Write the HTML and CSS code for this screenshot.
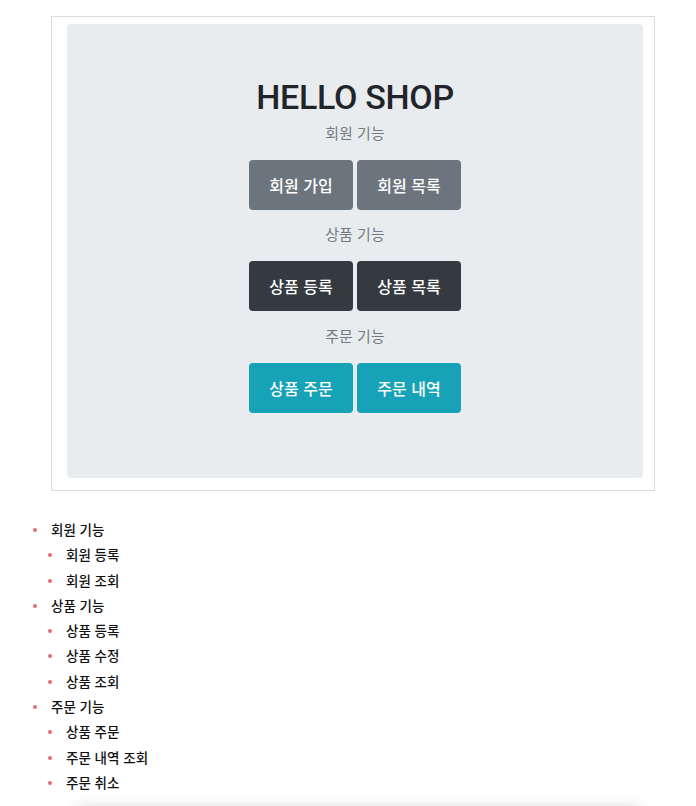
FILE: index.html
```html
<!DOCTYPE html>
<html lang="ko">
<head>
<meta charset="utf-8">
<link rel="stylesheet" href="styles.css">
</head>
<body>
<div class="shot">
  <div class="jumbo">
    <h1 class="title">HELLO SHOP</h1>
    <p class="label">회원 기능</p>
    <div class="btns">
      <a class="btn btn-gray">회원 가입</a>
      <a class="btn btn-gray">회원 목록</a>
    </div>
    <p class="label">상품 기능</p>
    <div class="btns">
      <a class="btn btn-dark">상품 등록</a>
      <a class="btn btn-dark">상품 목록</a>
    </div>
    <p class="label">주문 기능</p>
    <div class="btns">
      <a class="btn btn-info">상품 주문</a>
      <a class="btn btn-info">주문 내역</a>
    </div>
  </div>
</div>
<ul class="list">
  <li>회원 기능
    <ul class="sub">
      <li>회원 등록</li>
      <li>회원 조회</li>
    </ul>
  </li>
  <li>상품 기능
    <ul class="sub">
      <li>상품 등록</li>
      <li>상품 수정</li>
      <li>상품 조회</li>
    </ul>
  </li>
  <li>주문 기능
    <ul class="sub">
      <li>상품 주문</li>
      <li>주문 내역 조회</li>
      <li>주문 취소</li>
    </ul>
  </li>
</ul>
<div class="next"></div>
</body>
</html>
```
FILE: styles.css
```css
body {
  margin: 0;
  background: #fff;
  font-family: "Noto Sans CJK KR", "Noto Sans", sans-serif;
}
.shot {
  margin: 16px 0 0 51px;
  width: 576px;
  height: 466px;
  border: 1px solid #dcdcdc;
  padding: 7px 11px 0 15px;
}
.jumbo {
  background: #e9ecef;
  border-radius: 4px;
  height: 454px;
  display: flex;
  flex-direction: column;
  align-items: center;
  box-sizing: border-box;
  padding-top: 53px;
}
.title {
  margin: 0 0 5.5px;
  font-family: Roboto, "Noto Sans CJK KR", sans-serif;
  font-weight: 500;
  font-size: 34px;
  line-height: 40px;
  color: #212529;
  letter-spacing: -0.3px;
}
.label {
  margin: 0;
  font-size: 15px;
  line-height: 20px;
  color: #737b82;
}
.btns {
  display: flex;
  gap: 4px;
  margin-top: 17px;
  margin-bottom: 14.5px;
}
.btn {
  display: flex;
  align-items: center;
  justify-content: center;
  width: 104px;
  height: 50px;
  border-radius: 4px;
  color: #fff;
  font-size: 16px;
  font-weight: 500;
  box-sizing: border-box;
}
.btn-gray { background: #6c757d; }
.btn-dark { background: #343a40; }
.btn-info { background: #17a2b8; }
.list, .sub {
  list-style: none;
  margin: 0;
  padding: 0;
}
.list {
  margin-top: 26px;
  padding-left: 51px;
  font-size: 13.5px;
  font-weight: 500;
  color: #111;
  line-height: 25.3px;
}
.sub { padding-left: 15px; }
.list li { position: relative; }
.list li::before {
  content: "";
  position: absolute;
  left: -18px;
  top: 11px;
  width: 4px;
  height: 4px;
  border-radius: 50%;
  background: #e06c75;
}
.next {
  margin: 16px 56px 0 78px;
  height: 40px;
  background: #fff;
  box-shadow: 0 -2px 16px rgba(0,0,0,0.2);
}
```
